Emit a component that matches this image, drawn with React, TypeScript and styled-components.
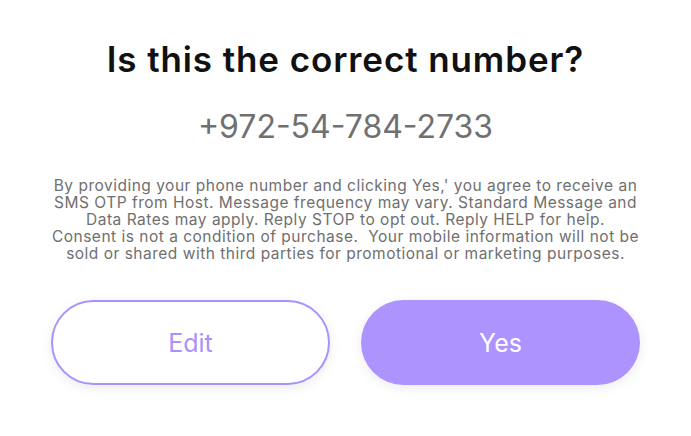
import React from "react";
import styled, { createGlobalStyle } from "styled-components";

const Global = createGlobalStyle`
  html, body { margin: 0; padding: 0; background: #ffffff; }
  body { font-family: "Inter", "Noto Sans", sans-serif; -webkit-font-smoothing: antialiased; }
`;

const Dialog = styled.div`
  width: 691px;
  height: 436px;
  box-sizing: border-box;
  padding-top: 37px;
  display: flex;
  flex-direction: column;
  align-items: center;
  background: #ffffff;
`;

const Title = styled.h1`
  margin: 0;
  font-size: 35px;
  line-height: 44px;
  font-weight: 600;
  color: #111111;
  letter-spacing: 0.9px;
`;

const Phone = styled.div`
  margin-top: 26px;
  font-size: 32px;
  line-height: 40px;
  font-weight: 400;
  color: #707070;
`;

const Disclaimer = styled.p`
  margin: 30px 0 0;
  white-space: nowrap;
  text-align: center;
  font-size: 15.5px;
  line-height: 17px;
  font-weight: 400;
  letter-spacing: 0.5px;
  color: #6f6f6f;
`;

const Actions = styled.div`
  margin-top: 38px;
  display: flex;
  gap: 31px;
`;

const Pill = styled.button<{ $primary?: boolean }>`
  width: 279px;
  height: 85px;
  box-sizing: border-box;
  border-radius: 43px;
  font-family: inherit;
  font-size: 25px;
  font-weight: 400;
  cursor: pointer;
  border: ${(p) => (p.$primary ? "none" : "2px solid #ab91fd")};
  background: ${(p) => (p.$primary ? "#ad93fe" : "#ffffff")};
  color: ${(p) => (p.$primary ? "#ffffff" : "#ab91fd")};
  box-shadow: 0 3px 12px rgba(0, 0, 0, 0.08);
`;

export default function App() {
  return (
    <>
      <Global />
      <Dialog>
        <Title>Is this the correct number?</Title>
        <Phone>+972-54-784-2733</Phone>
        <Disclaimer>
          By providing your phone number and clicking Yes,' you agree to receive an
          <br />
          SMS OTP from Host. Message frequency may vary. Standard Message and
          <br />
          Data Rates may apply. Reply STOP to opt out. Reply HELP for help.
          <br />
          Consent is not a condition of purchase.&nbsp; Your mobile information will not be
          <br />
          sold or shared with third parties for promotional or marketing purposes.
        </Disclaimer>
        <Actions>
          <Pill>Edit</Pill>
          <Pill $primary>Yes</Pill>
        </Actions>
      </Dialog>
    </>
  );
}
